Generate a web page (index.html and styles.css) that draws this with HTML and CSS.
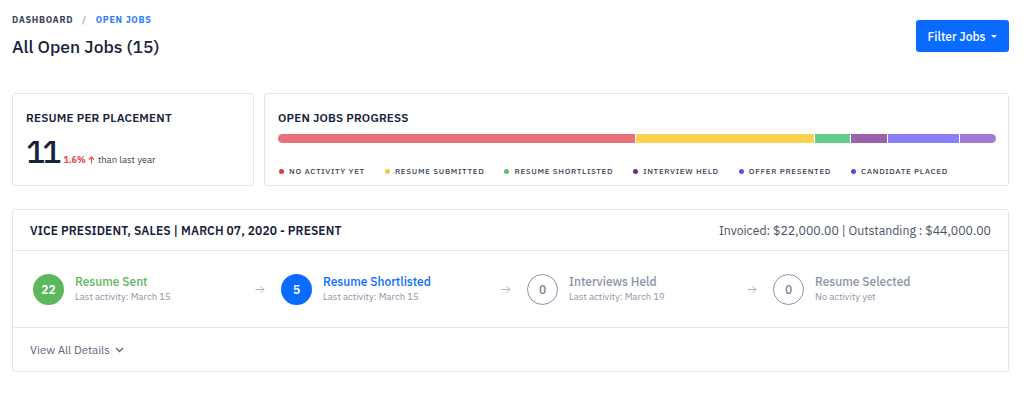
FILE: index.html
```html
<!DOCTYPE html>
<html lang="en">
<head>
    <meta charset="UTF-8">
    <meta name="viewport" content="width=device-width, initial-scale=1.0">
    <title>All Open Jobs</title>
    <link rel="stylesheet" href="styles.css">
</head>
<body>
<div class="page">

    <div class="top">
        <div>
            <div class="crumbs">
                <span class="crumb">Dashboard</span>
                <span class="sep">/</span>
                <span class="crumb active">Open Jobs</span>
            </div>
            <h1 class="title">All Open Jobs (15)</h1>
        </div>
        <button class="btn-filter">Filter Jobs <span class="caret"></span></button>
    </div>

    <div class="stats">
        <div class="card stat">
            <div class="card-title">Resume per placement</div>
            <div class="stat-row">
                <span class="big">11</span>
                <span class="delta">1.6%
                    <svg width="7" height="8" viewBox="0 0 7 8"><path d="M3.5 7.5V1M1 3.5L3.5 1L6 3.5" fill="none" stroke="#e5484d" stroke-width="1.1"/></svg>
                </span>
                <span class="delta-text">than last year</span>
            </div>
        </div>

        <div class="card progress">
            <div class="card-title">Open Jobs Progress</div>
            <div class="bar">
                <div class="seg red" style="width:50%"></div>
                <div class="seg yellow" style="width:25%"></div>
                <div class="seg green" style="width:5%"></div>
                <div class="seg purple" style="width:5%"></div>
                <div class="seg blue" style="width:10%"></div>
                <div class="seg lilac" style="width:5%"></div>
            </div>
            <div class="legend">
                <span class="item"><i class="dot d-red"></i>No activity yet</span>
                <span class="item"><i class="dot d-yellow"></i>Resume submitted</span>
                <span class="item"><i class="dot d-green"></i>Resume shortlisted</span>
                <span class="item"><i class="dot d-purple"></i>Interview held</span>
                <span class="item"><i class="dot d-blue"></i>Offer presented</span>
                <span class="item"><i class="dot d-lilac"></i>Candidate placed</span>
            </div>
        </div>
    </div>

    <div class="card job">
        <div class="job-head">
            <div class="job-title">Vice President, Sales | March 07, 2020 - Present</div>
            <div class="job-money">Invoiced: $22,000.00 | Outstanding : $44,000.00</div>
        </div>
        <div class="steps">
            <div class="step first">
                <span class="circle done">22</span>
                <div>
                    <div class="step-name green-text">Resume Sent</div>
                    <div class="step-sub">Last activity: March 15</div>
                </div>
            </div>
            <div class="step">
                <svg class="arrow" width="10" height="9" viewBox="0 0 10 9"><path d="M0.5 4.5H9M5.5 1L9 4.5L5.5 8" fill="none" stroke="#aab3c1" stroke-width="1"/></svg>
                <span class="circle current">5</span>
                <div>
                    <div class="step-name blue-text">Resume Shortlisted</div>
                    <div class="step-sub">Last activity: March 15</div>
                </div>
            </div>
            <div class="step">
                <svg class="arrow" width="10" height="9" viewBox="0 0 10 9"><path d="M0.5 4.5H9M5.5 1L9 4.5L5.5 8" fill="none" stroke="#aab3c1" stroke-width="1"/></svg>
                <span class="circle empty">0</span>
                <div>
                    <div class="step-name">Interviews Held</div>
                    <div class="step-sub">Last activity: March 19</div>
                </div>
            </div>
            <div class="step">
                <svg class="arrow" width="10" height="9" viewBox="0 0 10 9"><path d="M0.5 4.5H9M5.5 1L9 4.5L5.5 8" fill="none" stroke="#aab3c1" stroke-width="1"/></svg>
                <span class="circle empty">0</span>
                <div>
                    <div class="step-name">Resume Selected</div>
                    <div class="step-sub">No activity yet</div>
                </div>
            </div>
        </div>
        <div class="job-foot">
            View All Details
            <svg width="9" height="6" viewBox="0 0 9 6"><path d="M1 1L4.5 4.5L8 1" fill="none" stroke="#5c6679" stroke-width="1.3"/></svg>
        </div>
    </div>

</div>
</body>
</html>
```

FILE: styles.css
```css
body {
    margin: 0;
    font-family: "IBM Plex Sans", Roboto, "Liberation Sans", sans-serif;
    color: #18223a;
    background: #fff;
}
.page {
    padding: 14px 15px 0 12px;
}
.top {
    display: flex;
    justify-content: space-between;
    align-items: flex-start;
}
.crumbs {
    font-size: 9px;
    line-height: 12px;
    font-weight: 700;
    letter-spacing: 0.7px;
    text-transform: uppercase;
    color: #3b4456;
}
.sep {
    color: #a5adbb;
    margin: 0 6px;
}
.crumb.active {
    color: #2d7ff9;
}
.title {
    margin: 9px 0 0;
    font-size: 17.5px;
    line-height: 24px;
    font-weight: 500;
}
.btn-filter {
    margin-top: 6px;
    width: 93px;
    height: 32px;
    border: none;
    border-radius: 3px;
    background: #0a6cff;
    color: #fff;
    font-family: inherit;
    font-size: 12px;
    font-weight: 500;
    display: flex;
    align-items: center;
    justify-content: center;
    gap: 6px;
}
.caret {
    width: 0;
    height: 0;
    border-left: 3.5px solid transparent;
    border-right: 3.5px solid transparent;
    border-top: 3.5px solid #fff;
}
.card {
    border: 1px solid #e3e6ee;
    border-radius: 3px;
    background: #fff;
}
.stats {
    margin-top: 34px;
    display: grid;
    grid-template-columns: 242px 1fr;
    gap: 10px;
}
.stat, .progress {
    height: 93px;
    box-sizing: border-box;
    padding: 17px 12px 0 13px;
}
.card-title {
    font-size: 11.7px;
    line-height: 14px;
    font-weight: 600;
    text-transform: uppercase;
    letter-spacing: 0.2px;
    color: #18223a;
}
.stat-row {
    margin-top: 11px;
    display: flex;
    align-items: baseline;
}
.big {
    font-size: 32px;
    line-height: 30px;
    font-weight: 500;
    letter-spacing: -3px;
    margin-right: 5px;
}
.delta {
    font-size: 9px;
    font-weight: 700;
    color: #e5484d;
    margin-right: 3px;
}
.delta svg {
    vertical-align: -0.5px;
}
.delta-text {
    font-size: 9.5px;
    color: #3a4255;
}
.bar {
    margin-top: 9px;
    height: 9px;
    display: flex;
    border-radius: 5px;
    overflow: hidden;
    gap: 1px;
}
.seg {
    height: 100%;
}
.red { background: #e6717c; }
.yellow { background: #fbd34f; }
.green { background: #63cc8a; }
.purple { background: #9a62a8; }
.blue { background: #8b80f9; }
.lilac { background: #a27ad6; }
.legend {
    margin-top: 22px;
    display: flex;
    gap: 20px;
    padding-left: 1px;
}
.item {
    display: flex;
    align-items: center;
    gap: 5px;
    font-size: 8px;
    line-height: 12px;
    font-weight: 500;
    letter-spacing: 0.7px;
    text-transform: uppercase;
    color: #3a4255;
}
.dot {
    width: 5px;
    height: 5px;
    border-radius: 50%;
}
.d-red { background: #e03545; }
.d-yellow { background: #f9c33c; }
.d-green { background: #5cbe6b; }
.d-purple { background: #6b2c91; }
.d-blue { background: #5a4ff0; }
.d-lilac { background: #7044c4; }
.job {
    margin-top: 23px;
}
.job-head {
    height: 40px;
    padding: 0 17px;
    display: flex;
    align-items: center;
    justify-content: space-between;
    border-bottom: 1px solid #e3e6ee;
}
.job-title {
    font-size: 12px;
    font-weight: 600;
    text-transform: uppercase;
    letter-spacing: 0.1px;
}
.job-money {
    font-size: 12.3px;
    color: #4a5366;
}
.steps {
    height: 76px;
    padding-left: 20px;
    display: flex;
    align-items: center;
    border-bottom: 1px solid #e3e6ee;
}
.step {
    width: 246px;
    display: flex;
    align-items: center;
}
.step.first {
    width: 218px;
}
.arrow {
    margin: 0 16px 0 4px;
}
.circle {
    width: 31px;
    height: 31px;
    box-sizing: border-box;
    border-radius: 50%;
    display: flex;
    align-items: center;
    justify-content: center;
    font-size: 12px;
    font-weight: 600;
    margin-right: 11px;
    flex-shrink: 0;
}
.circle.done {
    background: #5cb85c;
    color: #fff;
}
.circle.current {
    background: #0a6cff;
    color: #fff;
}
.circle.empty {
    border: 1.5px solid #8a94a6;
    color: #7a8497;
    font-weight: 500;
}
.step-name {
    font-size: 12px;
    line-height: 16px;
    font-weight: 500;
    color: #8a94a6;
}
.green-text { color: #5cb85c; }
.blue-text { color: #0a6cff; }
.step-sub {
    font-size: 9.5px;
    line-height: 14px;
    color: #8c95a6;
}
.job-foot {
    height: 43px;
    padding: 0 17px;
    display: flex;
    align-items: center;
    gap: 5px;
    font-size: 11.5px;
    color: #5c6679;
}
```
